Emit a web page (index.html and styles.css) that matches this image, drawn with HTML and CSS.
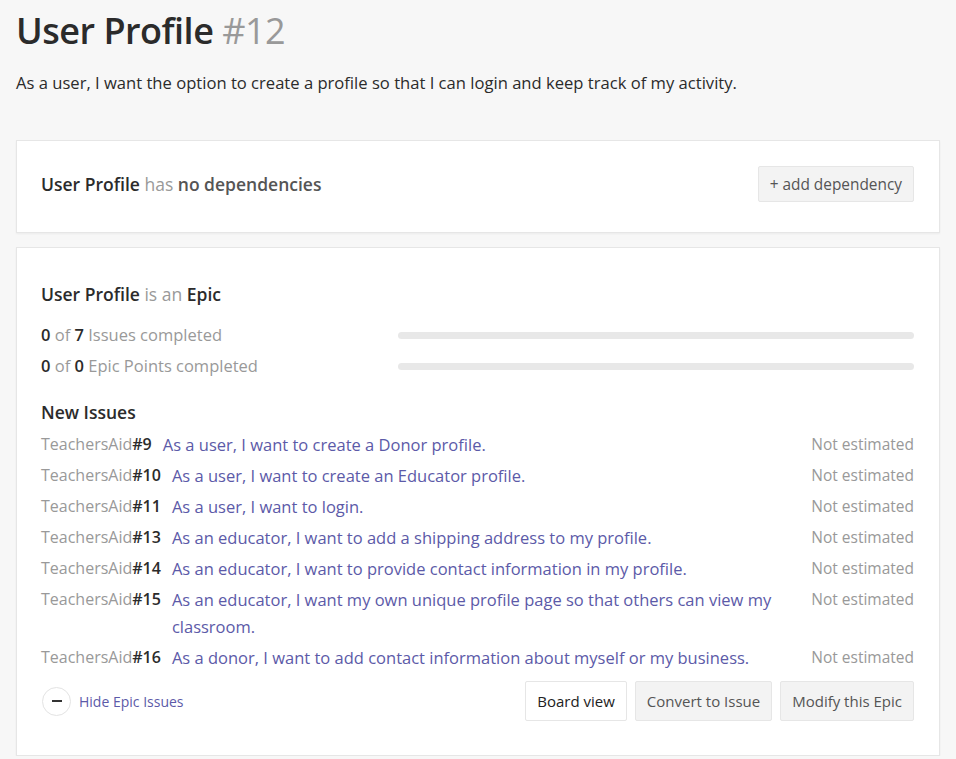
FILE: index.html
```html
<!DOCTYPE html>
<html lang="en">
<head>
<meta charset="utf-8">
<title>User Profile #12</title>
<link rel="stylesheet" href="styles.css">
</head>
<body>
<div class="page">
  <h1 class="title">User Profile <span class="num">#12</span></h1>
  <p class="desc">As a user, I want the option to create a profile so that I can login and keep track of my activity.</p>

  <section class="card deps">
    <div class="deps-text"><b class="strong">User Profile</b> <span class="muted">has</span> <b class="mid">no dependencies</b></div>
    <button class="btn btn-gray btn-small">+ add dependency</button>
  </section>

  <section class="card epic">
    <h2 class="epic-title"><b class="strong">User Profile</b> <span class="muted">is an</span> <b class="strong">Epic</b></h2>
    <div class="progress">
      <div class="plabel"><b class="strong">0</b> <span class="muted">of</span> <b class="strong">7</b> <span class="muted">Issues completed</span></div>
      <div class="bar"></div>
      <div class="plabel"><b class="strong">0</b> <span class="muted">of</span> <b class="strong">0</b> <span class="muted">Epic Points completed</span></div>
      <div class="bar"></div>
    </div>

    <h3 class="issues-head">New Issues</h3>
    <ul class="issues">
      <li class="issue"><span class="iid"><span class="repo">TeachersAid</span><b>#9</b></span><a class="ititle" href="#">As a user, I want to create a Donor profile.</a><span class="est">Not estimated</span></li>
      <li class="issue"><span class="iid"><span class="repo">TeachersAid</span><b>#10</b></span><a class="ititle" href="#">As a user, I want to create an Educator profile.</a><span class="est">Not estimated</span></li>
      <li class="issue"><span class="iid"><span class="repo">TeachersAid</span><b>#11</b></span><a class="ititle" href="#">As a user, I want to login.</a><span class="est">Not estimated</span></li>
      <li class="issue"><span class="iid"><span class="repo">TeachersAid</span><b>#13</b></span><a class="ititle" href="#">As an educator, I want to add a shipping address to my profile.</a><span class="est">Not estimated</span></li>
      <li class="issue"><span class="iid"><span class="repo">TeachersAid</span><b>#14</b></span><a class="ititle" href="#">As an educator, I want to provide contact information in my profile.</a><span class="est">Not estimated</span></li>
      <li class="issue"><span class="iid"><span class="repo">TeachersAid</span><b>#15</b></span><a class="ititle" href="#">As an educator, I want my own unique profile page so that others can view my classroom.</a><span class="est">Not estimated</span></li>
      <li class="issue"><span class="iid"><span class="repo">TeachersAid</span><b>#16</b></span><a class="ititle" href="#">As a donor, I want to add contact information about myself or my business.</a><span class="est">Not estimated</span></li>
    </ul>

    <div class="footer">
      <a class="hide" href="#"><span class="circle"><span class="minus"></span></span>Hide Epic Issues</a>
      <div class="actions">
        <button class="btn btn-white">Board view</button>
        <button class="btn btn-gray">Convert to Issue</button>
        <button class="btn btn-gray">Modify this Epic</button>
      </div>
    </div>
  </section>
</div>
</body>
</html>
```

FILE: styles.css
```css
* { box-sizing: border-box; }
html, body { margin: 0; padding: 0; }
body {
  background: #f7f7f7;
  font-family: "Open Sans", "Noto Sans", "Liberation Sans", sans-serif;
  color: #2b2b2b;
}
.page { padding: 0 16px; }
.title {
  margin: 0;
  padding-top: 7px;
  font-size: 36px;
  line-height: 48px;
  font-weight: 600;
  color: #2b2b2b;
  letter-spacing: -0.5px;
}
.num { font-weight: 400; color: #999; }
.desc {
  margin: 15px 0 0;
  font-size: 16.6px;
  line-height: 26px;
  color: #2b2b2b;
}
.card {
  background: #fff;
  border: 1px solid #e6e6e6;
  box-shadow: 0 1px 2px rgba(0,0,0,0.05);
}
.deps {
  margin-top: 44px;
  padding: 25px 25px 30px 24px;
  display: flex;
  justify-content: space-between;
  align-items: center;
}
.deps-text { font-size: 17.5px; line-height: 26px; }
.strong { font-weight: 600; color: #2b2b2b; }
.mid { font-weight: 600; color: #555; }
.muted { color: #999; font-weight: 400; }
.btn {
  font-family: inherit;
  font-size: 15px;
  height: 40px;
  padding: 0 11px;
  border: 1px solid #e6e6e6;
  border-radius: 2px;
  color: #555;
  cursor: pointer;
}
.btn-small { height: 36px; font-size: 15.4px; }
.btn-gray { background: #f3f3f3; }
.btn-white { background: #fff; color: #222; }
.epic {
  margin-top: 14px;
  padding: 33px 25px 34px 24px;
}
.epic-title {
  margin: 0;
  font-size: 17.5px;
  line-height: 26px;
  font-weight: 400;
}
.progress {
  margin-top: 15px;
  display: grid;
  grid-template-columns: 357px 1fr;
  row-gap: 5px;
  align-items: center;
}
.plabel { font-size: 16.5px; line-height: 26px; }
.bar {
  height: 7px;
  border-radius: 4px;
  background: #e8e8e8;
}
.issues-head {
  margin: 20px 0 0;
  font-size: 17.5px;
  line-height: 26px;
  font-weight: 600;
  color: #2b2b2b;
}
.issues {
  list-style: none;
  margin: 4px 0 0;
  padding: 0;
}
.issue {
  display: flex;
  align-items: flex-start;
  padding: 2px 0;
  font-size: 16px;
  line-height: 27px;
}
.iid { flex: none; color: #2b2b2b; }
.iid b { font-weight: 600; }
.repo { color: #999; }
.ititle {
  flex: 1;
  margin-left: 11px;
  margin-right: 30px;
  font-size: 16.5px;
  color: #5c5aa8;
  text-decoration: none;
}
.est { flex: none; color: #999; font-size: 15.5px; }
.footer {
  margin-top: 8px;
  display: flex;
  justify-content: space-between;
  align-items: center;
}
.hide {
  display: flex;
  align-items: center;
  gap: 8px;
  font-size: 14px;
  color: #5c5aa8;
  text-decoration: none;
  margin-left: 1px;
}
.circle {
  width: 29px;
  height: 29px;
  border: 1px solid #e3e3e3;
  border-radius: 50%;
  display: flex;
  align-items: center;
  justify-content: center;
}
.minus {
  width: 10px;
  height: 2px;
  background: #333;
}
.actions { display: flex; gap: 8px; }
```
